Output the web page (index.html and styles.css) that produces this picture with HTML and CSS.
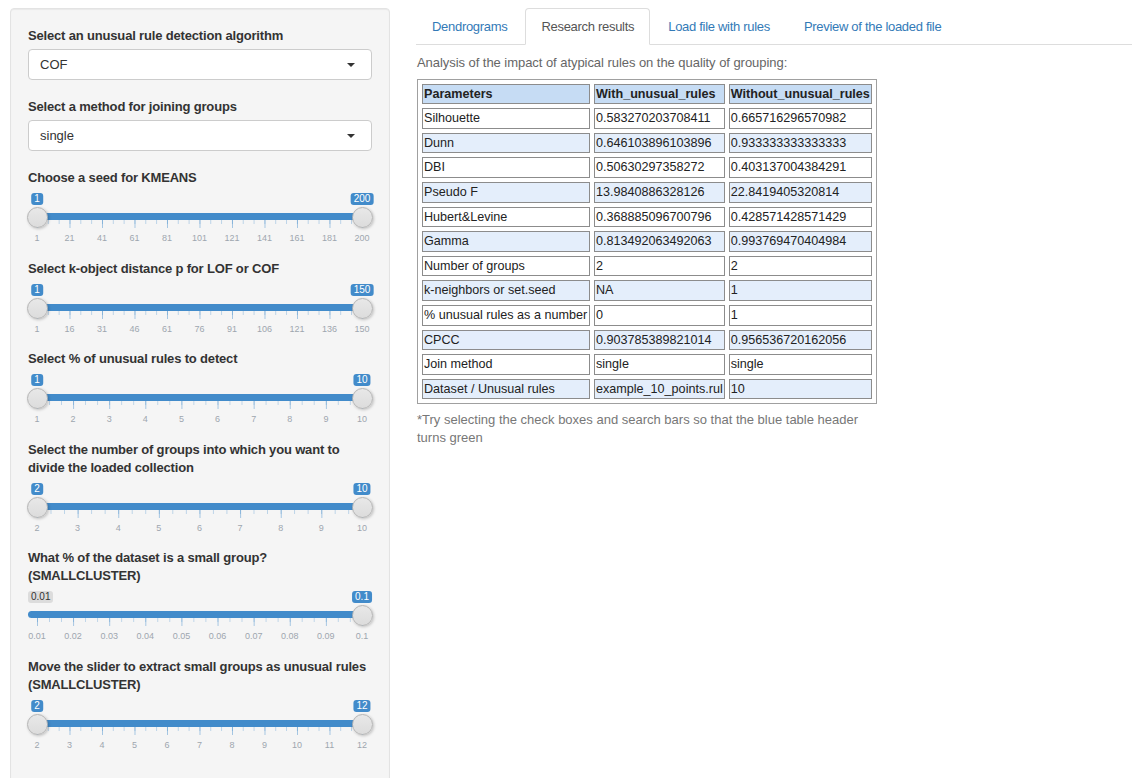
FILE: index.html
```html
<!DOCTYPE html>
<html lang="en">
<head>
<meta charset="utf-8">
<title>Unusual rules – research results</title>
<link rel="stylesheet" href="styles.css">
</head>
<body>
<div class="page">
  <aside class="well">
    <div class="form-group">
      <label class="control-label">Select an unusual rule detection algorithm</label>
      <div class="select"><span>COF</span></div>
    </div>
    <div class="form-group">
      <label class="control-label">Select a method for joining groups</label>
      <div class="select"><span>single</span></div>
    </div>

    <div class="form-group">
      <label class="control-label">Choose a seed for KMEANS</label>
      <div class="irs" style="--n:10">
        <span class="irs-bubble irs-from">1</span>
        <span class="irs-bubble irs-to">200</span>
        <div class="irs-bar"></div>
        <div class="irs-ticks"></div>
        <div class="irs-grid"><span>1</span><span>21</span><span>41</span><span>61</span><span>81</span><span>101</span><span>121</span><span>141</span><span>161</span><span>181</span><span>200</span></div>
        <span class="irs-thumb irs-thumb-from"></span>
        <span class="irs-thumb irs-thumb-to"></span>
      </div>
    </div>

    <div class="form-group">
      <label class="control-label">Select k-object distance p for LOF or COF</label>
      <div class="irs" style="--n:10">
        <span class="irs-bubble irs-from">1</span>
        <span class="irs-bubble irs-to">150</span>
        <div class="irs-bar"></div>
        <div class="irs-ticks"></div>
        <div class="irs-grid"><span>1</span><span>16</span><span>31</span><span>46</span><span>61</span><span>76</span><span>91</span><span>106</span><span>121</span><span>136</span><span>150</span></div>
        <span class="irs-thumb irs-thumb-from"></span>
        <span class="irs-thumb irs-thumb-to"></span>
      </div>
    </div>

    <div class="form-group">
      <label class="control-label">Select % of unusual rules to detect</label>
      <div class="irs" style="--n:9">
        <span class="irs-bubble irs-from">1</span>
        <span class="irs-bubble irs-to">10</span>
        <div class="irs-bar"></div>
        <div class="irs-ticks"></div>
        <div class="irs-grid"><span>1</span><span>2</span><span>3</span><span>4</span><span>5</span><span>6</span><span>7</span><span>8</span><span>9</span><span>10</span></div>
        <span class="irs-thumb irs-thumb-from"></span>
        <span class="irs-thumb irs-thumb-to"></span>
      </div>
    </div>

    <div class="form-group">
      <label class="control-label">Select the number of groups into which you want to divide the loaded collection</label>
      <div class="irs" style="--n:8">
        <span class="irs-bubble irs-from">2</span>
        <span class="irs-bubble irs-to">10</span>
        <div class="irs-bar"></div>
        <div class="irs-ticks"></div>
        <div class="irs-grid"><span>2</span><span>3</span><span>4</span><span>5</span><span>6</span><span>7</span><span>8</span><span>9</span><span>10</span></div>
        <span class="irs-thumb irs-thumb-from"></span>
        <span class="irs-thumb irs-thumb-to"></span>
      </div>
    </div>

    <div class="form-group">
      <label class="control-label">What % of the dataset is a small group? (SMALLCLUSTER)</label>
      <div class="irs irs-single" style="--n:9">
        <span class="irs-min">0.01</span>
        <span class="irs-bubble irs-to">0.1</span>
        <div class="irs-bar"></div>
        <div class="irs-ticks"></div>
        <div class="irs-grid"><span>0.01</span><span>0.02</span><span>0.03</span><span>0.04</span><span>0.05</span><span>0.06</span><span>0.07</span><span>0.08</span><span>0.09</span><span>0.1</span></div>
        <span class="irs-thumb irs-thumb-to"></span>
      </div>
    </div>

    <div class="form-group">
      <label class="control-label">Move the slider to extract small groups as unusual rules (SMALLCLUSTER)</label>
      <div class="irs" style="--n:10">
        <span class="irs-bubble irs-from">2</span>
        <span class="irs-bubble irs-to">12</span>
        <div class="irs-bar"></div>
        <div class="irs-ticks"></div>
        <div class="irs-grid"><span>2</span><span>3</span><span>4</span><span>5</span><span>6</span><span>7</span><span>8</span><span>9</span><span>10</span><span>11</span><span>12</span></div>
        <span class="irs-thumb irs-thumb-from"></span>
        <span class="irs-thumb irs-thumb-to"></span>
      </div>
    </div>
  </aside>

  <main class="main">
    <ul class="nav-tabs">
      <li><a href="#">Dendrograms</a></li>
      <li class="active"><a href="#">Research results</a></li>
      <li><a href="#">Load file with rules</a></li>
      <li><a href="#">Preview of the loaded file</a></li>
    </ul>

    <div class="tab-content">
      <div class="intro">Analysis of the impact of atypical rules on the quality of grouping:</div>
      <table class="results">
        <thead>
          <tr><th class="c1">Parameters</th><th class="c2">With_unusual_rules</th><th class="c3">Without_unusual_rules</th></tr>
        </thead>
        <tbody>
          <tr><td>Silhouette</td><td>0.583270203708411</td><td>0.665716296570982</td></tr>
          <tr><td>Dunn</td><td>0.646103896103896</td><td>0.933333333333333</td></tr>
          <tr><td>DBI</td><td>0.50630297358272</td><td>0.403137004384291</td></tr>
          <tr><td>Pseudo F</td><td>13.9840886328126</td><td>22.8419405320814</td></tr>
          <tr><td>Hubert&amp;Levine</td><td>0.368885096700796</td><td>0.428571428571429</td></tr>
          <tr><td>Gamma</td><td>0.813492063492063</td><td>0.993769470404984</td></tr>
          <tr><td>Number of groups</td><td>2</td><td>2</td></tr>
          <tr><td>k-neighbors or set.seed</td><td>NA</td><td>1</td></tr>
          <tr><td>% unusual rules as a number</td><td>0</td><td>1</td></tr>
          <tr><td>CPCC</td><td>0.903785389821014</td><td>0.956536720162056</td></tr>
          <tr><td>Join method</td><td>single</td><td>single</td></tr>
          <tr><td>Dataset / Unusual rules</td><td>example_10_points.rul</td><td>10</td></tr>
        </tbody>
      </table>
      <p class="note">*Try selecting the check boxes and search bars so that the blue table header turns green</p>
    </div>
  </main>
</div>
</body>
</html>
```

FILE: styles.css
```css
html, body {
  margin: 0;
  height: 100%;
  overflow: hidden;
  background: #fff;
}

body {
  font-family: "Helvetica Neue", Helvetica, "Liberation Sans", Arial, sans-serif;
  font-size: 13px;
  color: #333;
}

.page {
  display: flex;
  align-items: flex-start;
  padding-top: 8px;
}

/* ---------- sidebar ---------- */
.well {
  box-sizing: border-box;
  width: 380px;
  margin-left: 10px;
  padding: 18px 17px 40px;
  background: #f5f5f5;
  border: 1px solid #e3e3e3;
  border-radius: 4px;
  box-shadow: inset 0 1px 1px rgba(0, 0, 0, 0.05);
}

.form-group {
  margin-bottom: 18px;
}

.control-label {
  display: block;
  font-weight: bold;
  font-size: 13px;
  letter-spacing: -0.17px;
  line-height: 18px;
  margin-bottom: 4px;
  color: #333;
}

.select {
  box-sizing: border-box;
  height: 31px;
  padding: 0 16px 0 11px;
  display: flex;
  align-items: center;
  justify-content: space-between;
  background: #fff;
  border: 1px solid #ccc;
  border-radius: 4px;
  color: #333;
  font-size: 13px;
}

.select::after {
  content: "";
  width: 0;
  height: 0;
  border-style: solid;
  border-width: 4px 4px 0 4px;
  border-color: #333 transparent transparent transparent;
}

/* ---------- range slider ---------- */
.irs {
  position: relative;
  height: 54px;
  padding-top: 22px;
  box-sizing: border-box;
}

.form-group:has(.irs) {
  margin-bottom: 14.5px;
}

.irs-bar {
  height: 7px;
  margin: 0 10px 0 9px;
  background: #428bca;
}

.irs-single .irs-bar {
  margin-left: 0;
  border-radius: 4px 0 0 4px;
}

.irs-ticks {
  width: 326px;
  height: 8px;
  margin-left: 9px;
  background-image:
    linear-gradient(to right, rgba(66, 139, 202, 0.45) 1px, transparent 1px),
    linear-gradient(to right, rgba(66, 139, 202, 0.32) 1px, transparent 1px);
  background-size:
    calc(325px / var(--n)) 8px,
    calc(325px / var(--n) / 3) 4px;
  background-repeat: repeat-x;
}

.irs-grid {
  display: flex;
  margin-top: 5px;
  margin-left: calc(9px - 325px / var(--n) / 2);
  font-size: 9px;
  line-height: 10px;
  color: #9ea6af;
  white-space: nowrap;
}

.irs-grid span {
  flex: 0 0 calc(325px / var(--n));
  text-align: center;
}

.irs-bubble,
.irs-min {
  position: absolute;
  top: 2px;
  height: 12px;
  padding: 0 3px;
  font-size: 10px;
  line-height: 12px;
  border-radius: 3px;
  white-space: nowrap;
}

.irs-bubble {
  background: #428bca;
  color: #fff;
  transform: translateX(-50%);
}

.irs-from { left: 9px; }
.irs-to { left: 334px; }

.irs-min {
  left: 0;
  background: rgba(0, 0, 0, 0.1);
  color: #333;
}

.irs-thumb {
  position: absolute;
  top: 16px;
  box-sizing: border-box;
  width: 21px;
  height: 21px;
  border: 1px solid #b4b4b4;
  border-radius: 50%;
  background: linear-gradient(#e8e8e8, #dcdcdc);
  box-shadow: 1px 1px 3px rgba(0, 0, 0, 0.22);
}

.irs-thumb-from { left: -1px; }
.irs-thumb-to { left: 324px; }

/* ---------- main panel ---------- */
.main {
  flex: 1;
  margin-left: 26px;
  min-width: 0;
}

.nav-tabs {
  display: flex;
  margin: 0;
  padding: 0;
  list-style: none;
  border-bottom: 1px solid #ddd;
}

.nav-tabs li {
  margin-bottom: -1px;
  margin-right: 2px;
}

.nav-tabs a {
  display: block;
  padding: 9px 15px 7px;
  line-height: 18.6px;
  font-size: 13px;
  letter-spacing: -0.3px;
  color: #337ab7;
  text-decoration: none;
  border: 1px solid transparent;
  border-radius: 4px 4px 0 0;
}

.nav-tabs .active a {
  color: #555;
  background: #fff;
  border-color: #ddd #ddd transparent;
}

.tab-content {
  padding-left: 1px;
}

.intro {
  margin-top: 9px;
  line-height: 18px;
  font-size: 13px;
  letter-spacing: -0.05px;
  color: #666;
}

.results {
  margin-top: 7px;
  table-layout: fixed;
  border: 1px solid #a0a0a0;
  border-spacing: 4px;
  font-size: 12.6px;
  color: #222;
}

.results th,
.results td {
  box-sizing: border-box;
  padding: 1px;
  line-height: 16.6px;
  border: 1px solid #8c8c8c;
  text-align: left;
  white-space: nowrap;
  overflow: hidden;
  background: #fff;
}

.results th {
  font-weight: bold;
  background: #c6dcf4;
}

.results .c1 { width: 168px; }
.results .c2 { width: 130px; }
.results .c3 { width: 138px; }

.results tbody tr:nth-child(even) td {
  background: #e4eefb;
}

.note {
  width: 460px;
  margin: 7px 0 0;
  line-height: 18px;
  font-size: 13px;
  color: #777;
}
```
